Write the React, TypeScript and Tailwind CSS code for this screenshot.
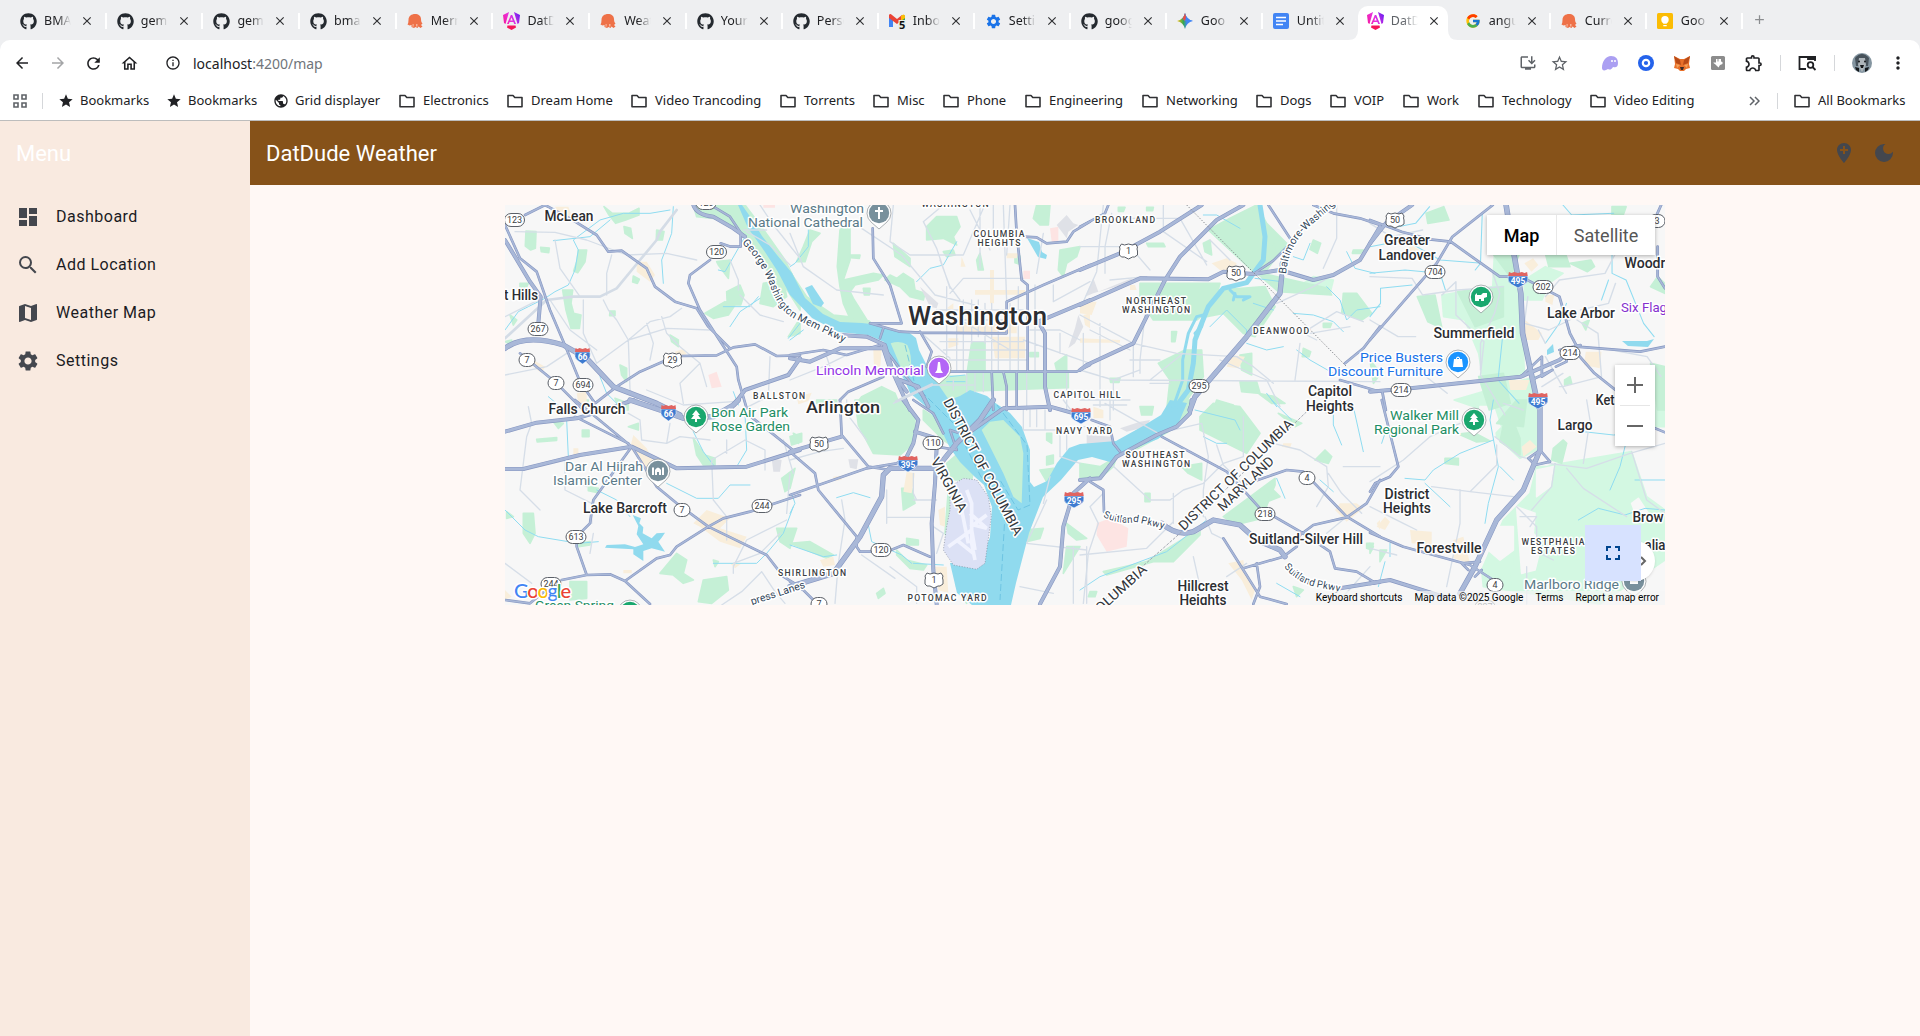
import React from "react";
import {
  MdDashboard, MdSearch, MdMap, MdSettings, MdAddLocation, MdDarkMode, MdFullscreen,
  MdArrowBack, MdArrowForward, MdRefresh, MdOutlineHome, MdInfoOutline, MdInstallDesktop,
  MdStarBorder, MdStar, MdMoreVert, MdPublic, MdOutlineExtension, MdClose, MdAdd,
} from "react-icons/md";
import { FaGithub } from "react-icons/fa";
import { FcGoogle } from "react-icons/fc";

/* ---------- browser tabs ---------- */

type Kind = "github" | "muffin" | "angular" | "gmail" | "gear" | "gemini" | "docs" | "google" | "keep";

const tabs: { kind: Kind; title: string; active?: boolean }[] = [
  { kind: "github", title: "BMAD" }, { kind: "github", title: "gemi" }, { kind: "github", title: "gemi" },
  { kind: "github", title: "bmad" }, { kind: "muffin", title: "Merm" }, { kind: "angular", title: "DatDu" },
  { kind: "muffin", title: "Weat" }, { kind: "github", title: "Your" }, { kind: "github", title: "Perso" },
  { kind: "gmail", title: "Inbox" }, { kind: "gear", title: "Settin" }, { kind: "github", title: "goog" },
  { kind: "gemini", title: "Goo" }, { kind: "docs", title: "Untitl" }, { kind: "angular", title: "DatDu", active: true },
  { kind: "google", title: "angul" }, { kind: "muffin", title: "Curre" }, { kind: "keep", title: "Goo" },
];

function Favicon({ kind }: { kind: Kind }) {
  switch (kind) {
    case "github":
      return <FaGithub size={17} color="#24292f" />;
    case "google":
      return <FcGoogle size={16} />;
    case "gear":
      return <MdSettings size={17} color="#1a73e8" />;
    case "muffin":
      return (
        <svg width="16" height="16" viewBox="0 0 16 16">
          <path d="M1.500 7C1.500 3 4.500 1 8 1s6 2 6 5c0 2 .5 3.500 1.500 4.500L14 12l1.500 1.500-2 1.500-2-1.500-1 1.500-2-1-1.500 1-2.500-1v-2l-2 .5-2-1Q1.500 10 1.500 7Z" fill="#ee7148" />
          <path d="M5.500 11v3l1.200-.6V11M9 11h1.500v2.500H9z" fill="#f8b296" />
        </svg>
      );
    case "angular":
      return (
        <svg width="17" height="18" viewBox="0 0 17 18">
          <defs>
            <linearGradient id="ng" gradientUnits="userSpaceOnUse" x1="0" y1="12" x2="17" y2="3">
              <stop offset="0" stopColor="#f6189a" /><stop offset=".5" stopColor="#e832e0" /><stop offset="1" stopColor="#6a1df0" />
            </linearGradient>
          </defs>
          <path d="M0 3 6 0 2.500 12 1 11ZM17 3 11 0l3.500 12L16 11Z" fill="url(#ng)" />
          <path d="M7.800 3 4 12h1.800l.8-2h3.800l.8 2H13L9.200 3ZM8.500 5.500l1.200 3H7.300Z" fill="url(#ng)" />
          <path d="M4.500 13.500h8l.5 2-4.500 2.500L4 15.500Z" fill="#f5155b" />
        </svg>
      );
    case "gmail":
      return (
        <svg width="17" height="16" viewBox="0 0 17 16">
          <path d="M0 2v12h4V6Z" fill="#4285f4" /><path d="M12 6v8h4V2Z" fill="#34a853" />
          <path d="M0 2Q1 0 3 2l5 4 5-4v5L8 11 0 5Z" fill="#ea4335" /><path d="M12 3q3-3 4 0v2l-4 3Z" fill="#fbbc04" />
          <rect x="9.500" y="7" width="7" height="9" fill="#e6efe9" />
          <text x="10" y="15.500" fontSize="11" fontWeight="700" fontFamily="Noto Sans, sans-serif" fill="#111">5</text>
        </svg>
      );
    case "gemini":
      return (
        <svg width="16" height="16" viewBox="0 0 16 16">
          <defs>
            <linearGradient id="gm" x1="0" y1=".5" x2="1" y2=".5">
              <stop offset="0" stopColor="#fbbc04" /><stop offset=".4" stopColor="#34a853" /><stop offset=".62" stopColor="#4285f4" />
            </linearGradient>
          </defs>
          <path d="M8 0q1.500 6.500 8 8-6.500 1.500-8 8-1.500-6.500-8-8 6.500-1.500 8-8Z" fill="url(#gm)" />
          <path d="M8 0q1.500 6.500 8 8H8L5.500 5.500Q7 4 8 0Z" fill="#3f86f5" /><path d="M8 0Q7 4 5.500 5.500L8 8l1-4Z" fill="#ea4e43" />
        </svg>
      );
    case "docs":
      return (
        <svg width="16" height="16" viewBox="0 0 16 16">
          <rect width="16" height="16" rx="2" fill="#4285f4" />
          <path d="M3 4.500h10M3 8h10M3 11.500h7" stroke="#fff" strokeWidth="1.600" />
        </svg>
      );
    case "keep":
      return (
        <svg width="16" height="16" viewBox="0 0 16 16">
          <rect width="16" height="16" rx="1.500" fill="#fbbc04" />
          <circle cx="8" cy="6.800" r="3.700" fill="#fff" /><path d="M6 9h4v1.500H6zM6.300 12h3.400v1.300H6.300z" fill="#fff" />
        </svg>
      );
  }
}

function TabStrip() {
  return (
    <div className="flex h-10 items-end bg-[#eeeff1] pl-[10px]">
      {tabs.map((t, i) => (
        <div key={i} className={i < 7 ? "flex h-10 w-[96.7px] shrink-0 flex-col" : "flex h-10 w-[96px] shrink-0 flex-col"}>
          <div className={t.active
            ? "relative mt-1.5 flex h-[34px] w-[90px] -translate-x-px items-center rounded-t-[10px] bg-white pb-1"
            : "relative mt-1.5 flex h-[34px] items-center pb-1"}>
            {t.active && (
              <>
                <svg className="absolute -left-2.5 bottom-0" width="10" height="10"><path d="M10 0v10H0Q10 10 10 0Z" fill="#fff" /></svg>
                <svg className="absolute -right-2.5 bottom-0" width="10" height="10"><path d="M0 0v10h10Q0 10 0 0Z" fill="#fff" /></svg>
              </>
            )}
            <div className={t.active ? "ml-[9px] flex w-[17px] shrink-0 items-center" : "ml-[10px] flex w-[17px] shrink-0 items-center"}>
              <Favicon kind={t.kind} />
            </div>
            <div className={t.active
              ? "ml-[7px] w-[27px] shrink-0 overflow-hidden whitespace-nowrap text-[12.5px] text-[#5f6368] [mask-image:linear-gradient(90deg,#000_45%,transparent)]"
              : "ml-[7px] w-[27px] shrink-0 overflow-hidden whitespace-nowrap text-[12.5px] text-[#202124] [mask-image:linear-gradient(90deg,#000_50%,transparent)]"}>
              {t.title}
            </div>
            <MdClose className="ml-[9px] shrink-0 text-[#303134]" size={14} />
            {!t.active && tabs[i + 1]?.active !== true && <div className="ml-auto h-4 w-0.5 bg-white" />}
          </div>
        </div>
      ))}
      <MdAdd className="mb-[13px] ml-[9px] text-[#8b8d90]" size={15} />
    </div>
  );
}

/* ---------- toolbar ---------- */

function Toolbar() {
  return (
    <div className="flex h-[46px] items-center bg-white text-[#202124]">
      <MdArrowBack className="ml-[13px]" size={18} />
      <MdArrowForward className="ml-[18px] text-[#a4a5a7]" size={18} />
      <MdRefresh className="ml-[17px]" size={19} />
      <MdOutlineHome className="ml-[17px]" size={19} />
      <MdInfoOutline className="ml-[26px]" size={16} />
      <div className="ml-3 text-[14px]">localhost<span className="text-[#70757a]">:4200/map</span></div>
      <div className="ml-auto flex items-center">
        <MdInstallDesktop className="text-[#5f6368]" size={18} />
        <MdStarBorder className="ml-[13px] text-[#5f6368]" size={19} />
        <svg className="ml-[32px]" width="18" height="18" viewBox="0 0 18 18">
          <path d="M1 14C1 7 5 2 10 2s7 3 7 7c0 4-2 5-5 4-2 3-3 3-5 2-3 2-6 2-6-1Z" fill="#ab9ff2" />
          <path d="M11 6v2M14 6v2" stroke="#fff" strokeWidth="1.500" />
        </svg>
        <svg className="ml-[18px]" width="18" height="18" viewBox="0 0 18 18">
          <circle cx="9" cy="9" r="8" fill="#2563eb" /><circle cx="9" cy="9" r="3.200" fill="none" stroke="#fff" strokeWidth="2.200" />
        </svg>
        <svg className="ml-[18px]" width="18" height="18" viewBox="0 0 18 18">
          <path d="m1 2 6 3h4l6-3-1 8 1 4-4 1-2 2H7l-2-2-4-1 1-4Z" fill="#e8702a" />
          <path d="m1 2 6 4 1 5-5-2ZM17 2l-6 4-1 5 5-2Z" fill="#b84a17" /><path d="M7 13h4l-1 3H8Z" fill="#3a2b26" />
          <path d="m3 10 4 1-3 3ZM15 10l-4 1 3 3Z" fill="#f5a25a" />
        </svg>
        <svg className="ml-[19px]" width="16" height="16" viewBox="0 0 16 16">
          <rect x="1" y="1" width="14" height="14" rx="1.500" fill="#8c8c8c" />
          <path d="M6 4h1.500v2.500h1V4H11v2.500l1.500.5v2L10 10l-1.500 2.500L7 11 5.500 9.500 3.500 8V7.500H6Z" fill="#fff" />
        </svg>
        <MdOutlineExtension className="ml-[18px]" size={20} />
        <div className="ml-4 h-4 w-px bg-[#d5d7da]" />
        <svg className="ml-[17px]" width="19" height="18" viewBox="0 0 19 18" fill="none" stroke="#202124" strokeWidth="1.800">
          <path d="M17 7V3H1.500v12H8" /><path d="M10 3h7v2h-7z" fill="#202124" /><circle cx="12.500" cy="11" r="2.800" /><path d="m14.500 13 3 3" />
        </svg>
        <div className="ml-[17px] h-4 w-px bg-[#d5d7da]" />
        <svg className="ml-[17px]" width="20" height="20" viewBox="0 0 20 20">
          <circle cx="10" cy="10" r="10" fill="#8495a0" /><path d="M3 5q7-8 14 0l-1 8H4Z" fill="#47525b" />
          <path d="M7 5h6l1 7-4 7-4-7Z" fill="#aeb5ba" /><circle cx="7" cy="8.500" r="1" fill="#15181b" /><circle cx="13" cy="8.500" r="1" fill="#15181b" />
          <path d="M8 12h4l-1 3H9ZM3 14l4 1v4l-3-2ZM17 14l-4 1v4l3-2Z" fill="#14171a" />
        </svg>
        <MdMoreVert className="ml-[16px] mr-[12px]" size={20} />
      </div>
    </div>
  );
}

const bookmarks: { label: string; icon: "star" | "globe" | "folder"; w: string }[] = [
  { label: "Bookmarks", icon: "star", w: "w-[108px]" }, { label: "Bookmarks", icon: "star", w: "w-[107px]" },
  { label: "Grid displayer", icon: "globe", w: "w-[125px]" }, { label: "Electronics", icon: "folder", w: "w-[108px]" },
  { label: "Dream Home", icon: "folder", w: "w-[124px]" }, { label: "Video Trancoding", icon: "folder", w: "w-[149px]" },
  { label: "Torrents", icon: "folder", w: "w-[93px]" }, { label: "Misc", icon: "folder", w: "w-[70px]" },
  { label: "Phone", icon: "folder", w: "w-[82px]" }, { label: "Engineering", icon: "folder", w: "w-[117px]" },
  { label: "Networking", icon: "folder", w: "w-[114px]" }, { label: "Dogs", icon: "folder", w: "w-[74px]" },
  { label: "VOIP", icon: "folder", w: "w-[73px]" }, { label: "Work", icon: "folder", w: "w-[75px]" },
  { label: "Technology", icon: "folder", w: "w-[112px]" }, { label: "Video Editing", icon: "folder", w: "w-[130px]" },
];

function Folder() {
  return (
    <svg width="16" height="14" viewBox="0 0 16 14" fill="none" stroke="#303134" strokeWidth="1.600" strokeLinejoin="round">
      <path d="M1 1.500h5l1.800 2H15v9.200H1Z" />
    </svg>
  );
}

function BookmarkBar() {
  return (
    <div className="flex h-[35px] items-center border-b border-[#bdbdbd] bg-white pb-1 text-[13px] text-[#202124]">
      <svg className="ml-[13px]" width="14" height="14" viewBox="0 0 14 14" fill="none" stroke="#5f6368" strokeWidth="1.600">
        <path d="M1 1h4v4H1zM9 1h4v4H9zM1 9h4v4H1zM9 9h4v4H9z" />
      </svg>
      <div className="ml-[15px] mr-[15px] h-4 w-px bg-[#d5d7da]" />
      {bookmarks.map((b, i) => (
        <div key={i} className={"flex shrink-0 items-center whitespace-nowrap " + b.w}>
          <div className={b.icon === "folder" ? "ml-px flex w-6 shrink-0 items-center" : "flex w-[22px] shrink-0 items-center"}>
            {b.icon === "star" ? <MdStar size={16} /> : b.icon === "globe" ? <MdPublic size={16} /> : <Folder />}
          </div>
          {b.label}
        </div>
      ))}
      <svg className="ml-auto" width="11" height="10" viewBox="0 0 11 10" fill="none" stroke="#5f6368" strokeWidth="1.500">
        <path d="m1 1 4 4-4 4M6 1l4 4-4 4" />
      </svg>
      <div className="ml-[17px] h-4 w-px bg-[#d5d7da]" />
      <div className="ml-4 mr-[14px] flex w-[112px] items-center gap-2 whitespace-nowrap"><Folder />All Bookmarks</div>
    </div>
  );
}

/* ---------- map geometry ---------- */

/* The map is described in eight survey sheets, three units to a pixel. */
const sheet = {
  A: "translate(500 200) scale(.33333)",
  B: "translate(790 200) scale(.33333)",
  C: "translate(1080 200) scale(.33333)",
  D: "translate(1370 120) scale(.35077 .33333)",
  E: "translate(500 400) scale(.33333)",
  F: "translate(790 400) scale(.33333)",
  G: "translate(1080 400) scale(.33333)",
  H: "translate(1370 400) scale(.33333)",
} as const;
type Sheet = keyof typeof sheet;
type Shapes = [Sheet, string][];

const parks: Shapes = [
  ["A", "M78 93 108 95 106 145 92 150 76 138ZM122 142l26 2-2 14-22-3ZM235 150l25 0-5 35-22 33-12-5 10-30ZM312 20l25 20 50 0 30-15 0 20-40 15-30 10-20-25ZM372 80l20 5 5 30-22-15ZM470 90l22 5-5 25-18 0ZM400 228l18 10-6 12-14-4ZM188 270l30 0-5 40 8 30 22 5-5 40-25 0-15-55ZM330 333l15 0 0 14-16 0ZM510 405l25 15 0 20-20-15ZM680 275l40-20 12 30-10 30-40 0ZM615 340l60-35 30 10-20 30-45 10ZM650 185l40-5-5 55-30-40ZM580 15l155 0 60 80 60 85 45 90 0 60-45-70-65-60-40-80-60-50-50-15-50-5ZM790 250l60-10 10 50-40 30-40-10ZM360 495l20 10 0 40-15-20ZM345 595l40 15 0 20-25 0ZM30 345l20 15-10 15ZM15 425l20-5 0 15ZM60 250l25 0-5 10-20 0ZM865 410l35-55 0 45Z"],
  ["B", "M60 90 90 100 65 125 45 185 20 185 40 140ZM150 90l30-30 0 120-20 60 90-20 30 5-15 15-70 15-15 20 10 20 50 80-10 25-30 0-40-90-10-50-8-60ZM410 80l30-30 60 0 10 30-20 30 10 25-40-20-50 5ZM310 130l50 45 0 25-45-30ZM340 220l30 20 5 30 30 10-5 20-40-10-30-30-45-20 15-15 20 10ZM570 160l10 50-15 0-5-30ZM740 15l40 0-5 60-25 0-20-20ZM810 150l60-10-10 30-30 20-10 40-15-20ZM545 428l40 0 0 85 250 0 0 50-280 10-60 30-80-30 30-45 85 0ZM720 458l25 0 0 12-25 0ZM795 490l35-25 0 45-30 0ZM180 165l30 0-2 10-25-2ZM220 265l20 0-2 20-15 0ZM460 155l30-5 5 15-25 5ZM675 168l15 0 0 25-15-5ZM215 590l60-30 40 20 20 50-150 0ZM0 215l50 75 80 55 90 10 20 10-110 5-60-30-70-75Z"],
  ["C", "M385 90 450 55 530 15 560 70 620 130 560 210 520 215ZM370 130l20-10 5 45-20-10ZM200 130l50 0 5 10-50 0ZM180 250l240 0-20 70-50 40-130 0-40-60ZM415 270l140-10 30 60-60 90-35-10-60-60-50 10ZM525 215l220 50 10 20-160-10ZM585 120l35 10-10 30-30-20ZM700 120l22 10-10 30-22-12ZM790 280l40 0 45 60-30 20-60-20ZM820 150l30 0-8 10-25 0ZM275 395l15 0-5 30-10 0ZM235 490l80-40 50 0 5 80-70 100-40 0 10-90ZM480 465l35-5 0 65-30-15ZM480 545l50 0 10 35-55-5ZM410 600l50 15-60 15ZM535 580l50 10 30 20-40 0ZM200 22l20 0-2 10-18 0ZM115 22l20 0-5 12-15 0ZM730 370l25 0-5 12-20 0ZM670 445l22 10-5 15-20 0ZM90 535l30 0-3 12-25 0Z"],
  ["D", "M135 530l50-5 20 100-40-20ZM250 515l130-15 0 90-80 30ZM350 400l80-10-30 80ZM160 280l50-20 15 40-60 10ZM500 400l50-20 20 60-60 0ZM570 430l60-10 10 20-20 15ZM0 720l30 40-20 30ZM800 730l40 10 0 130-20 0ZM310 770l70-10 20 90-60 20ZM820 470l20 20 0 30-40-20ZM555 780l15-10 5 20-20 5ZM605 610l20-10-10 30ZM690 260l40 0-10 30-30 0Z"],
  ["E", "M580 115l35 50 30 10 0 20-35 0-20-30ZM110 118l60-5 0 8-58 5ZM160 65l30 5-15 15ZM247 90l20 0 0 20-20 0ZM240 0l25 0-5 20ZM70 340l30 0 5 60-15 30-20-30ZM210 545l50 0 0 50-50 5ZM480 520l50-60 30 20-10 40 30 20-30 10-30-25ZM610 540l70-10 5 40-50 40-40-5ZM830 385l60 0-20 60-30-20ZM845 235l40-30-15 60-15 10ZM880 100l20 10-5 20ZM265 260l30 5-5 12-25-5ZM230 430l40-5 0 10-35 5ZM385 80l30-10 0 20ZM20 335l20 15-20 5ZM640 480l15 5-10 15Z"],
  ["F", "M195 0 350 0 375 60 370 130 330 165 250 160 205 75ZM400 30l90 60 15 60-45-30-60-60ZM470 190l70-60 15 60-10 50-60 0ZM475 270l40 60-40 90-10-20ZM335 265l30 0 10 45-35 20ZM350 415l35 5 0 15-35 0ZM80 0l60 0 0 10-60 0ZM0 110l35-10 0 25-30 10ZM260 580l20-15 5 15-20 15ZM320 450l30 30 60 15-10 15-40-5-40-40ZM770 170l20-5 0 25-20 5ZM770 100l15 0 0 30-15-10ZM750 210l40-5 30 10-50 30ZM700 390l60-5-10 30-40 10ZM830 370l60 45-30 5-25-20ZM830 440l40 0-50 80ZM550 0l50 0-30 40-30 5ZM0 430l60-5 70 40-20 10ZM490 490l40 120-30-50Z"],
  ["G", "M0 190 60 200 110 170 100 200 60 235 0 240ZM130 150l90-40 90-110 30 0-15 50-60 45-90 50ZM360 50l40-40 80 10 60 80-40 60-80-40-60-30ZM430 350l155-115 0 20-40 100-80 20ZM550 310l30-40 20 20ZM70 515l130-30 80-50 80-50 0 20-80 80-60 0-140 40ZM305 200l60-10 0 50-40-20ZM195 280l15 0 0 25-15 0ZM735 150l20 20-10 20-40-10ZM860 430l20 0-5 20-15-5ZM640 560l30 10-20 20ZM30 575l20 0-5 15-20 0ZM280 0l20 30-20 15ZM180 20l40 0-5 25-30 0ZM595 40l70 30-20 10Z"],
  ["H", "M265 102l45-5 50 26-40 3ZM550 145l30-25 10 10-15 60-30-10ZM225 175l40 0 0 20-40-5ZM400 75l30-10 20 50 0 50-60-40ZM0 430l10 10-10 20ZM30 450l20 0-20 35ZM440 0l30 0-10 80-80-10Z"],
];

const paleParks: Shapes = [
  ["D", "M355 400 410 400 435 640 440 760 330 830 310 700 270 600 210 590 205 525 350 500ZM440 480l60-40 50 20-40 30-20 50-50 0ZM240 840l230-70-10 110-110 0Z"],
  ["H", "M290 0 500 0 500 150 450 175 380 110 370 30ZM545 195 785 155 830 290 885 330 885 480 690 612 340 560 335 510 400 360 480 280 500 200 530 200ZM855 0h30v80h-30ZM340 500l40-80 60-60-20 200Z"],
  ["C", "M700 230l60 10-10 40-110-10Z"],
];

const clearings: Shapes = [
  ["H", "M500 210l50-10-10 60-40 30ZM440 320l55 20-5 60 25 30-20 80-40 10ZM380 380l50 0 0 70-40 30-35-30ZM785 310l20-15 40 60-40 10ZM330 20l40 0 20 60-20 20-40-10Z"],
];

const commerce: Shapes = [
  ["A", "M165 20l40 0 15 40-30 0ZM410 185l30 0 25 40-15 20-40-30ZM100 480l35 20-10 20-25-20ZM230 580l30-5 0 35-25 0ZM525 455l25-8 10 15-30 10Z"],
  ["B", "M605 410l100 0 0 65-90 0ZM475 415l30 0 0 20-30 10ZM600 210l12 0 0 100-12 0ZM650 160l35 0-5 15-30 0ZM470 325l20-15 0 20ZM250 450l25 0-5 60-18 0ZM515 170l12 30-15 0ZM555 270l150 0 0 14-150 0ZM880 345l20-5 0 45-15-10ZM20 590l45-12-10 25-30 10ZM500 370l180 0 0 30-180 0Z"],
  ["C", "M395 190l45-15 30 15-10 20-40 0ZM0 310l50-5-15 40-35-5ZM455 465l40 5-20 35-35-5ZM0 415l120 5 0 8-120 0ZM150 255l15 0 5 15-20 0Z"],
  ["D", "M430 590l60 50-10 20-45 0ZM615 695l45 0-5 50-45-10ZM440 430l25-15 15 20-20 20ZM500 525l25 0-5 30-20-10ZM110 370l30 20-25 10ZM395 780l60 0-10 30-45 0Z"],
  ["E", "M400 105l40 40 30 60-20 10-60-70ZM580 370l40-40 70 25-30 30 80 25-20 35-60-20-60-45ZM220 145l15 0 0 30-15 0ZM15 570l20 20-20 10ZM690 490l35 0-20 15ZM370 510l25 0 0 10-25 0Z"],
  ["F", "M350 215l25 5-10 60-25-5ZM445 330l20-10 0 60-15-5ZM435 500l35 0 5 80-30-10ZM90 480l40-10 5 25-35 5ZM130 230l25-3 0 12-25 5Z"],
  ["G", "M610 130l25 0-5 15-25-5ZM780 310l50 0 20 15-50 40-35-35ZM445 490l45-10 5 40 30 50-10 30-30-60ZM890 370l10-10 0 30ZM40 20l30 10 0 25-30 0Z"],
  ["H", "M120 390l65 5 0 40-60-5ZM20 380l25-30 15 15-15 25ZM455 140l25-20 20 20-40 30ZM250 420l30-10 20 80-50-15Z"],
];

const clinics: Shapes = [
  ["A", "M625 525l25-10 15 45-30 5ZM790 15l35 0 0 8-35 0Z"],
  ["B", "M780 85l25-5 0 45-20 0ZM700 212l20 0 0 25-20 0Z"],
  ["G", "M50 370l40-15 55 30-5 55-60 15-30-50Z"],
];

const greys: Shapes = [
  ["B", "M390 260l55 50-5 15-20-5ZM865 345l-10 40-20 60 20-15 25-50ZM800 75l30-30 20 25 15 5-30 20-5 20Z"],
  ["C", "M15 290l25-55 15 40 100-40 5 10-120 35Z"],
  ["E", "M815 175l30 5-5 35-20 0Z"],
  ["G", "M20 105l75 5-10 50-65-20ZM120 85l60-20 30-5-10 20-60 15Z"],
  ["F", "M175 178l30 0-5 30-20-5Z"],
];

const streams: Shapes = [
  ["A", "M15 390l40-55 30-15 50-25 30-20 40-20 20-45 10-60-15-30 80-60 70-20 80 0 60-10M160 122l110-12 60-50M520 20l-5 80-30 80 5 70M670 320l80 0 25-30M690 380l30-45 60-40M735 110l-60 105-20-5M145 590l30 25M300 530l20 50 30 30M700 575l15 40M865 415l35-45"],
  ["B", "M55 90l0 50-40 50-15 10M380 245l40-40 40-10 40-70M0 420l40-30M470 545h55M480 530l45-5"],
  ["C", "M370 45l40 0 70 40M640 170l30 10 20-50M740 260l40 40 20 60 30-30 70-10M640 340l60 5 60 20 30 30M500 430l60 20 50-10M650 450l40 30 70 40M390 380l50-50 60 60 0 30M800 155l25 50 60 15M560 580l30 40M520 310l60 20M525 235l80 10"],
  ["D", "M0 380l100-20 100 60 120 10M0 460l100-10 100 10 15 50M170 260l-40 50-50 10M320 280l-5 150-15 20M0 590l30-40 0-45 90-10M550 255l25 30 120-5M690 390l0 70 40 20 50 130 30 40M500 670l40-60 20-60M380 630l-15 150 60 70M680 480l-20 60"],
  ["E", "M15 330l60 60 40 20 120 20 60-5M200 60l5 110M580 95l30 60 30 40M735 40l5 110-30 50M500 250l90 45 65 0 35-40 60 0M640 490l130 0 30-30 50-60 30-80M290 270l60 30 40 50"],
  ["F", "M140 293l50-15 50 15M235 375l10 50 90 40 30 25M0 435l100 35 40-5M0 340l15-30-10-30M370 490l90 5"],
  ["G", "M345 30l120 30 15 30M370 110l40 20 30 0M590 235l25 60M0 570l60-40 160-60 40-15 120-95M720 240l40 35M575 0l60 60M760 15l0 60 25 60M820 20l30 135M590 550l70 40"],
  ["H", "M35 130l20-60M370 0l-10 60 25 140-30 110-10 60M370 120l-100 40-80 50-25 30-60-5M165 250l75 70M390 200l40 40M625 360l60-35 80 20 60-20 60 5M770 120l-20 80-30 70M795 240l90 0M640 95l90 10 90-5M60 430l0 40M25 560l20-75M850 30l0 60"],
];

const minors: Shapes = [
  ["A", "M45 95l120 2 95 23 120 45 120-5 90 20M165 120l15 85 60 85M250 300v100l40 90 95-70 65-55 60-15 35-25M320 285v-65l15-55M310 300l15 30 25 30 35 60 5 150 30 40M440 370l20 60-10 50M485 350l15 50 40 40 60 50 20 70M385 420l115-35 130 5M15 525l125-25 60-40M150 300l60 90 80 60M440 570l110 45 150-10M690 180l25 60 0 30M810 470l-5 120-60 30M550 610l-10-60 60-60M720 285l60 60 70 20M740 95l70 40 60 60M780 15l40 60 80 100M730 90l70 0M15 350l120-60"],
  ["B", "M0 100l40 100 100 70 140 15M215 85l120 80 100 120 120 30M310 15l-10 110 60 40 160 0 60-140M450 180l30 80 30 40M480 280l40-45 180 0M460 15l-60 50 40 80 40 120M570 15v190M610 15v100M640 15l10 290M660 15l-10 150M470 260l0 250M500 380v130M520 300v210M545 300v130M565 300v110M585 310v120M605 310v200M625 360v150M660 310v200M685 260v250M735 255v260M440 330h260M460 360h190M450 425h250M460 450h250M470 480h240M330 395l60 0 90 80M480 340l180 110M700 420l200 70M720 390l90 0 60 30M790 255l0 50 110-60M760 100l-20 120M810 400v60M0 540l100-40 80-40M110 470l20 60M310 610l120-55 120 0M490 540v30M530 515v60M555 515v60M580 515v60M710 515v115M830 515v115M540 30l60 120"],
  ["C", "M70 15l-20 200-40 90M95 40l-20 100 0 80M0 140l150 0 60 70M140 55l160 0 80 140M250 15v80l130 90M390 120l60 60M0 345l160 85 130 30 180 10 50 30 60 50M200 300l-20 180 0 40M160 430l0 100M60 370v250M10 400v100M0 510l100 30 800 5M210 540l100-80M90 240l110-10M30 390l120 60M100 540l80-30M510 400l140-10 60 30M690 385l80-50 80 30M660 430l-15 110M690 400l120-20M420 480l140 60 40 80M770 15v100l-40 90M150 480h90M210 550h60M100 630V545M0 600h150M590 310l110-50 100-60"],
  ["D", "M0 310l60 40 90-20M0 470l120 5 30 50 100-15 130-10M205 525l40-40 0 100 80 80-10 100 70 120M500 530l40-50 130-20 30-60M350 460l20 60-15 60-40 90 0 80M590 600l60 40 10 130-110 30-10 0M450 530l-10 80 70 20 60-30M500 670l-20-40M600 570l80-20 20-60M560 820l-60-110M490 800l60-40M220 820l-60-50M690 690l100 20 40 60M0 600l80 50 50 0"],
  ["E", "M80 110l15-40-10-50M80 110l-20 160 60 60M420 60l5 60 75 10 40-20 90 10M385 40l35 20M500 130l10-60M195 180l0 90 80 40 0 60M220 240l40 20M640 300l-5-120 100-60 60 30 0 60M640 300l40 50 0 70M860 360l-120 60-40 80 0 20M785 515l-60 60-60 40M785 515l40 60 30 35M15 490l80 60M280 400l-10 60M700 490l80-30 60-60M850 120l30 100M870 220l-10 120M680 160l0-40"],
  ["F", "M170 0v40l60 80M0 180l90-25 70-10M155 300l10 60-20 130-10 120M370 300l70 0M290 270v100M290 352h130M300 500l80 60 0 50M215 465l100 70M430 380l30 20-20 60M370 220v60l10 20M700 30v60h110M720 30v50M740 30v50M765 30v60M780 230l-20 80M770 300l-60 130 180 20M820 0l30 40M810 90v80l60 20M830 90v60M850 440v170M890 440l0 170M690 560l100 20"],
  ["G", "M75 10l160 90M235 100l130-30 20 100-15 100 0 80M90 190l120 110 60 0 40-30 60-20 60-60 60-20 0-120M280 280l0 90M70 280l-40 40 25 50-30 90-15 150M0 465l200-20 80-80M140 15h-100M0 80h80M90 0v60M375 350l20 50 40 20M350 400l50-40M580 130l80 20 80 50 5 60-35 60M745 220l40 60 60 60M790 200l110 0M800 350l-60 50M440 530l60-40M340 470l20 90-20 50M870 500l-90 100M700 0l40 40M490 255l-60-60-20-60"],
  ["H", "M535 190l115 15 130-45 105-30M590 205l50 60 130 85M785 155l45 145 55 40M375 110l75 60 40 10M0 245l100-65 80-70 90-40M185 260l115 15 130 15M270 270v100l-40 190M0 320l100 50 40 20M555 190l-10 70-60 70M440 320l60 60 0 70M450 350h50l-20 30M660 60l-20 130M650 0l10 60M300 275l80-80 0-60M470 500l0 112M490 450l60 30M400 10l60 20M0 445l80 20"],
];

const majors: { w: number; list: Shapes }[] = [
  { w: 8, list: [
    ["A", "M15 75l45 100 50 40 40 115 55 130 35 85 45 65M75 45l60-30 75 40 80 50 35 50 40-3 75 53 25 55 60 45 65 20 35 55 65 65M285 610l65-50 70-45 80-35 45-12 105-2 50-24 65-9 65 35 70-2M630 180l-60 45-5 25 35 80 110 170 5 40 25 85M640 20l50 30 40 60M722 105v35l-30 0-30-10M60 460l110 90 75 75"],
    ["B", "M248 85l2 90 50 80 35 115h-95M675 15l5 85 15 140 18 15v260M700 110l40 2 30 18 60-5 20-30 50-30M900 195l-140 60-110 50v95l-260-2-60-3-90-25M390 395l35 60-15 45 60 15h390l40-20M0 465l100-15 70 15 100-30M150 600l25-25 105-45M605 515l5 115M640 515l10 45v70M680 515v105M280 385l-10 30M280 440l60 80 60 70"],
    ["C", "M0 80l75-40 10-25M565 15l65 100M900 380l-50 65-55 45M780 540l120 35M700 15l60 25 80 15 60 20M520 222l60-40 40-40"],
    ["D", "M350 255l-115 95-45 80L0 660M170 358l60 7 140 105 60 0 110 60 30 110 20 40 180 15 71-15M35 815l10 55M590 700l50 60 60 50M0 300l90 35 80 23M820 380v90l21 35M830 255l-15 35M540 690l60-15M530 740l30-15 0-20M430 770l60-60 0 60 30-20-60 30"],
    ["E", "M225 50l160 80M225 0l55 45 115 95M740 40l70 55 75 60M395 140l-115 160-10 70-40 40v30l30 85M395 140l75 120 60 50 95 70 175 85 50 65 50 30M185 540l75-15 70-2 45 20 95-68 40-10 20-25 95-60 45-25 80-20 150-50M375 543l75 69M15 600l75 10 60-50"],
    ["F", "M0 155l75 65 10 50 115 140 0 30 10 15h80l50-20 80 35M150 0l5 105 80 95 65 10M0 285l230-80 90-15 30-20M35 565l35 35M0 545l40 25M540 110l-60-20 20 60-60-10M370 0l60 40 30 60"],
    ["G", "M245 110l195 105 100 110 130 75M35 60l55 20 10 50 20 25M30 245l40 25 2 65M430 415l60 95 50 80 80 22M670 400l80 55 15 50 65 10 50 30M530 490l10 70-20 52M490 255l130-45 50 5 130 135 100 60M900 240l-40 70-60 42-100 23-40 30-10 35-40 30-120 35"],
    ["H", "M35 0l30 120 20 80-25 30-45 20-15 25M0 398l100 42 200 55 70 45M510 150l-35 25 20 20M510 150l30 35-45 10M855 85l30 12M295 510l-20-20 55-5M335 510l-20 20"],
  ] },
  { w: 12, list: [
    ["A", "M15 120l75 125 32 45-7 80M900 475l-35 50-130 45-45 60M580 15q10 30 60 35l60 35 35 25"],
    ["B", "M900 300l-155 65 20 35v160l15 70M0 475l60 10 90-40h130l20 60 50 70M150 405l80 5 55 25 25 85 50 110M330 540l55 20 30 60"],
    ["C", "M0 210l120-50 120-65 125-80M490 15l-80 45-110 110-45 70-95 190-140 65-20 15M0 315l180-80 205 3 45-23 90 7 80-12 100 30 60-15 80-45 60-100M605 230v-40"],
    ["D", "M0 370l45-60 75-55M0 815l130-12 300-33 110-50 50-40"],
    ["E", "M15 95l95-27 120-13 100-30 70-25M15 207h55l170-42 155-25 135 65 210-5 160-50"],
    ["F", "M0 155l155-45M440 140l-5 110-10 120 5 140 10 102M340 0l45 60-15 70-20 40M375 95l65 20M900 235l-50 45-30 100-10 120-60 112M520 110l120-85 140-5 90 25"],
    ["G", "M0 240l60-5 50-65 120-65 60-25 40-40 5-40M780 565l120-20"],
    ["H", "M0 550l60-10 160 50"],
  ] },
  { w: 16, list: [
    ["A", "M15 445q60-45 175-10l70 40 80 85 130 50 70 35"],
    ["C", "M330 630l15-40 155-180 100-130 5-50"],
    ["D", "M388 255l22 145 20 120 5 120 45 220"],
    ["E", "M390 0l90 30 70 25 90-5 60-35 15-15"],
    ["F", "M440 205H300l-20 20-5 65-65 120-80 110-130 40M440 205l60-75 70-70 40-60"],
    ["G", "M245 370q45 40 95 25l60-35 80 15 50 45 70 30 15 20"],
    ["H", "M510 0v150l-50 120-80 90-65 140-45 80"],
  ] },
];

const Layer = ({ list, ...rest }: { list: Shapes } & React.SVGProps<SVGPathElement>) => (
  <>{list.map(([s, d], i) => <path key={i} transform={sheet[s]} d={d} {...rest} />)}</>
);

type Label = [string, number, number, number];
const towns: Label[] = [
  ["McLean", 569, 221, 49], ["t Hills", 521, 300, 34], ["Falls Church", 587, 414, 77], ["Lake Barcroft", 625, 513, 84],
  ["Greater", 1407, 245, 46], ["Landover", 1407, 260, 57], ["Woodr", 1645, 268, 41], ["Lake Arbor", 1581, 318, 68],
  ["Summerfield", 1474, 338, 81], ["Capitol", 1330, 396, 44], ["Heights", 1330, 411, 48], ["Largo", 1575, 430, 35],
  ["District", 1407, 499, 45], ["Heights", 1407, 513, 48], ["Forestville", 1449, 553, 65], ["Brow", 1648, 522, 31],
  ["Suitland-Silver Hill", 1306, 544, 114], ["Hillcrest", 1203, 591, 51], ["Heights", 1203, 605, 47], ["Ket", 1605, 405, 19],
  ["alia", 1655, 550, 21],
];
const quarters: Label[] = [
  ["WASHINGTON", 955, 207, 67], ["COLUMBIA", 999, 237, 51], ["HEIGHTS", 999, 246, 43], ["BROOKLAND", 1125, 223, 60],
  ["NORTHEAST", 1156, 304, 60], ["WASHINGTON", 1156, 313, 68], ["DEANWOOD", 1281, 334, 56], ["CAPITOL HILL", 1087, 398, 67],
  ["BALLSTON", 779, 399, 52], ["NAVY YARD", 1084, 434, 56], ["SOUTHEAST", 1155, 458, 59], ["WASHINGTON", 1156, 467, 68],
  ["SHIRLINGTON", 812, 576, 68], ["POTOMAC YARD", 947, 601, 79], ["WESTPHALIA", 1553, 545, 63], ["ESTATES", 1553, 554, 44],
];
const places: [string, number, number, number, string][] = [
  ["Washington", 790, 213, 74, "#5b7a88"], ["National Cathedral", 748, 227, 115, "#5b7a88"],
  ["Lincoln Memorial", 816, 375, 108, "#9334e6"], ["Bon Air Park", 711, 417, 77, "#1e8e64"], ["Rose Garden", 711, 431, 79, "#1e8e64"],
  ["Dar Al Hijrah", 565, 471, 78, "#5b7a88"], ["Islamic Center", 553, 485, 89, "#5b7a88"],
  ["Price Busters", 1360, 362, 83, "#1a73e8"], ["Discount Furniture", 1328, 376, 115, "#1a73e8"],
  ["Walker Mill", 1390, 420, 69, "#1e8e64"], ["Regional Park", 1374, 434, 85, "#1e8e64"],
  ["Marlboro Ridge", 1524, 589, 95, "#5b7a88"], ["Six Flag", 1621, 312, 46, "#8430ce"],
  ["Green Spring", 535, 610, 79, "#1e8e64"],
];
const ovals: [string, number, number][] = [
  ["123", 514.500, 220], ["120", 716.500, 252], ["267", 538, 329], ["7", 527, 360], ["7", 556, 383], ["694", 583, 385],
  ["295", 1199, 386], ["704", 1435, 272], ["202", 1543, 287], ["214", 1570, 353], ["214", 1401, 390], ["110", 933, 443],
  ["7", 682, 510], ["244", 762, 506], ["613", 576, 537], ["244", 551, 584], ["120", 881, 550], ["4", 1307, 478],
  ["218", 1265, 514], ["4", 1495, 585], ["3", 1657, 221], ["7", 819, 604], ["120", 706, 203], ["337", 1485, 607],
];
const usRoutes: [string, number, number][] = [["29", 672.500, 360], ["1", 1128.500, 251], ["50", 1236, 273], ["50", 1395, 220], ["50", 819, 444], ["1", 934, 580]];
const interstates: [string, number, number][] = [
  ["66", 582.500, 356], ["66", 668.500, 413], ["395", 908, 464], ["695", 1081, 416], ["295", 1074, 500], ["495", 1518, 280], ["495", 1538, 401],
];
const pins: [number, number, string, string][] = [
  [879, 213, "#78909c", "M-1-6h2v3h3v2H1v7h-2v-7h-3v-2h3Z"],
  [939, 368, "#b366f6", "M-1-6h2l1 8 2 3h-8l2-3Z"],
  [696, 417, "#1aa76e", "M0-7l4 5H2l3 4H1v3h-2V2h-4l3-4h-2Z"],
  [658, 471, "#78909c", "M-6 4v-7l1-1 1 1v7ZM4 4v-7l1-1 1 1v7ZM-3 4v-5q3-5 6 0v5H1V1h-2v3Z"],
  [1481, 297, "#1aa76e", "M-6 4v-6l2-2v2h4l2-2 4 0v4l-3 1v3h-3V2h-2v2Z"],
  [1458, 362, "#1a94ff", "M-5 5l1-8h2v-1q2-3 4 0v1h2l1 8ZM-1-3h2v-1h-2Z"],
  [1474, 420, "#1aa76e", "M0-7l4 5H2l3 4H1v3h-2V2h-4l3-4h-2Z"],
  [1634, 581, "#78909c", "M-4-3h8v6h-8Z"],
  [630, 612, "#1aa76e", "M0-5l3 5h-6Z"],
];

function CityMap() {
  const roads = { fill: "none", strokeLinejoin: "round" as const, strokeLinecap: "round" as const };
  const soft = { strokeWidth: 5, strokeLinejoin: "round" as const };
  const halo = { stroke: "#fff", strokeWidth: 3, strokeLinejoin: "round" as const, paintOrder: "stroke" };
  return (
    <svg className="block h-[400px] w-[1160px] font-['Roboto',sans-serif]" viewBox="505 205 1160 400">
      <rect x="505" y="205" width="1160" height="400" fill="#f7f7f7" />
      <Layer list={paleParks} fill="#d3f8e2" stroke="#d3f8e2" {...soft} />
      <Layer list={clearings} fill="#f7f7f7" stroke="#f7f7f7" {...soft} />
      <Layer list={parks} fill="#c5f0d6" stroke="#c5f0d6" {...soft} />
      <Layer list={commerce} fill="#f9eedb" />
      <Layer list={clinics} fill="#fde4e3" />
      <Layer list={greys} fill="#dfe1e7" />
      <Layer list={streams} {...roads} stroke="#8fdcf1" strokeWidth="3" />

      {/* rivers and lakes */}
      <g fill="#90daee">
        <path d="M738 205 748 228 765 252 778 272 790 295 812 318 838 332 868 335 884 342 895 365 905 381 910 393 924 405 937 421 950 448 960 462 975 477 984 485 992 507 990 537 980 562 950 563 957 593 972 605 1011 605 1016 583 1029 533 1043 497 1061 480 1078 460 1092 457 1110 462 1123 453 1158 439 1179 422 1187 403 1170 400 1161 415 1143 426 1116 441 1080 444 1069 448 1057 463 1047 481 1034 487 1030 482 1030 450 1022 427 1010 413 994 402 987 396 970 390 960 396 949 400 938 384 927 366 919 350 916 338 907 331 890 330 880 325 862 323 840 322 823 314 805 298 792 273 777 255 762 236 749 215 742 205Z" />
        <path d="M805 288l7-3 12 18-3 4-8-3Z" />
        <path d="M1027 238l12 4 3 10 5 3-1 4-8-2Z" />
        <path transform="translate(500 400) scale(.33333)" d="M398 345l25 10-5 15 12 12-2 18 27 15 15-15 25-2-10 15-10 12 20 30-40-10-25 8 0 30-30-20 0-15-85-5 5-8 55-2 30 8 25-8-20-30 5-25Z" />
        <path d="M1622 341l25 0 7-2-6 8-20-1ZM1547 350l6-6 1 8-7 3Z" />
      </g>
      <path transform={sheet.C} d="M280 630 325 570 340 490 345 420 385 320 430 265 500 248 550 180 555 110 540 15" {...roads} stroke="#90daee" strokeWidth="15" />
      <path transform={sheet.C} d="M280 620 308 540 308 480 325 400 350 350 370 345 365 380 345 400M450 270l20 20 40 0-20 10M460 300l5-20" {...roads} stroke="#90daee" strokeWidth="9" />
      <g fill="#c5f0d6">
        <path transform={sheet.F} d="M575 90 600 65 640 60 690 110 700 160 695 310 670 290 640 220Z" />
        <path transform={sheet.B} d="M302 430q30-10 50 5 15 30 10 75l-30-10Z" />
      </g>
      <path transform={sheet.F} d="M480 260 520 235 560 240 595 290 604 350 585 490 560 508 490 495 460 450 470 380 480 330Z" fill="#dce1f5" stroke="#7d8494" strokeWidth="2" strokeDasharray="3 5" />
      <path transform={sheet.F} d="M530 270l15 40v120l10 50M515 330l20 100M475 440l70-50 10 60M590 345l-40 30 40 10-50-45M500 420l50 40" fill="none" stroke="#f1f3fe" strokeWidth="11" />
      <path d="M905 345l10 40 40 40 25 50 25 40-5 85M997 405l30 40 3 60-12 5-18-30" fill="none" stroke="#66bfe0" strokeWidth=".8" strokeDasharray="7 3" />

      {/* streets */}
      <Layer list={minors} {...roads} stroke="#d6dee8" strokeWidth="4" />
      <path transform={sheet.A} d="M15 415l125-115 80-10h80l50-25 70-85 50-60 10-25 50-65" {...roads} stroke="#d4dce6" strokeWidth="8" />
      {majors.map((m) => <Layer key={m.w} list={m.list} {...roads} stroke="#8797c1" strokeWidth={m.w} />)}
      {majors.map((m) => <Layer key={m.w} list={m.list} {...roads} stroke="#a9b8d8" strokeWidth={m.w - 3.500} />)}
      <path d="M895 402l38-18" stroke="#d4dce6" strokeWidth="3" />
      <path transform={sheet.C} d="M320 15 800 500" fill="none" stroke="#85888d" strokeWidth="3" strokeDasharray="4 5" />
      <path transform={sheet.G} d="M680 35 300 400 60 612" fill="none" stroke="#a5a8b2" strokeWidth="3" strokeDasharray="9 4" />

      {/* road shields */}
      {ovals.map(([n, x, y], i) => {
        const w = n.length === 1 ? 16 : 20;
        return (
          <g key={i}>
            <rect x={x - w / 2} y={y - 6.500} width={w} height="13" rx="6.500" fill="#fff" stroke="#5b6068" strokeWidth="1" />
            <text x={x} y={y + 3.300} fontSize="9" textAnchor="middle" fill="#3c4043">{n}</text>
          </g>
        );
      })}
      {usRoutes.map(([n, x, y], i) => (
        <g key={i} transform={`translate(${x} ${y})`}>
          <path d="M-7-7l3 1 4-1 4 1 3-1 2 3q-1 2 0 4v4l-3 2H4L0 8l-4-2h-3l-2-2V0q1-2 0-4Z" fill="#fff" stroke="#5b6068" strokeWidth="1" />
          <text y="3.300" fontSize="9" textAnchor="middle" fill="#3c4043">{n}</text>
        </g>
      ))}
      {interstates.map(([n, x, y], i) => {
        const k = n.length === 3 ? 1.300 : 1;
        return (
          <g key={i} transform={`translate(${x} ${y})`}>
            <path transform={`scale(${k} 1)`} d="M-7.500-4h15q1 5-2 8L0 8l-5.500-4q-3-3-2-8Z" fill="#3e7bd0" stroke="#fff" strokeWidth=".5" />
            <path transform={`scale(${k} 1)`} d="M-7-8l2 1 2-1 3 1 3-1 2 1 2-1 .5 4h-15Z" fill="#e06461" />
            <text y="3.800" fontSize="8.500" fontWeight="700" textAnchor="middle" fill="#fff">{n}</text>
          </g>
        );
      })}

      {/* labels that follow a line */}
      <g fill="#33475b" fontSize="10.500" {...halo}>
        <path id="gw" d="M742 243q20 20 29 45 8 22 22 30l56 27" fill="none" stroke="none" />
        <text letterSpacing=".1"><textPath href="#gw">George Washington Mem Pkwy</textPath></text>
        <path id="bw" d="M1286 274q2-28 24-48l40-34" fill="none" stroke="none" />
        <text><textPath href="#bw">Baltimore-Washington</textPath></text>
        <path id="sp" d="M1103 517q18 8 32 5 12 2 36 9" fill="none" stroke="none" />
        <text fontSize="10"><textPath href="#sp">Suitland Pkwy</textPath></text>
        <path id="sq" d="M1284 567q14 16 32 20l36 7" fill="none" stroke="none" />
        <text fontSize="10"><textPath href="#sq">Suitland Pkwy</textPath></text>
        <text transform="translate(752 605) rotate(-18)">press Lanes</text>
      </g>
      <g fill="#33373c" fontSize="13.500" textAnchor="middle" {...halo}>
        <text transform="translate(979 469) rotate(62)" textLength="153" lengthAdjust="spacingAndGlyphs">DISTRICT OF COLUMBIA</text>
        <text transform="translate(945 487) rotate(61)" textLength="60" lengthAdjust="spacingAndGlyphs">VIRGINIA</text>
        <text transform="translate(1239 478) rotate(-44)" textLength="153" lengthAdjust="spacingAndGlyphs">DISTRICT OF COLUMBIA</text>
        <text transform="translate(1249 487) rotate(-44)" textLength="72" lengthAdjust="spacingAndGlyphs">MARYLAND</text>
        <text transform="translate(1124 592) rotate(-42)" textLength="64" lengthAdjust="spacingAndGlyphs">OLUMBIA</text>
      </g>

      {pins.map(([x, y, c, d], i) => (
        <g key={i} transform={`translate(${x} ${y})`}>
          <path d="M0 16-8 9a12 12 0 1 1 16 0Z" fill="#fff" stroke="#80868b" strokeOpacity=".8" strokeWidth=".8" />
          <circle r="10.200" fill={c} /><path d={d} fill="#fff" />
        </g>
      ))}
      {places.map(([t, x, y, w, c], i) => (
        <text key={i} x={x} y={y} fontSize="13.500" fill={c} textLength={w} lengthAdjust="spacingAndGlyphs" {...halo}>{t}</text>
      ))}
      {quarters.map(([t, x, y, w], i) => (
        <text key={i} x={x - w / 2} y={y} fontSize="8.600" fontWeight="500" fill="#3c4043" textLength={w} {...halo}>{t}</text>
      ))}
      {towns.map(([t, x, y, w], i) => (
        <text key={i} x={x - w / 2} y={y} fontSize="14" fontWeight="500" fill="#2b2d31" textLength={w} lengthAdjust="spacingAndGlyphs" {...halo}>{t}</text>
      ))}
      <text x="806" y="413" fontSize="17" fontWeight="500" fill="#2b2d31" textLength="74" lengthAdjust="spacingAndGlyphs" {...halo}>Arlington</text>
      <text x="908" y="325" fontSize="26" fontWeight="500" fill="#2b2d31" textLength="139" lengthAdjust="spacingAndGlyphs" {...halo}>Washington</text>

      <rect x="1310" y="591" width="355" height="14" fill="#f5f5f5" fillOpacity=".7" />
      <text x="514" y="597.500" fontSize="20" fontWeight="500" fontFamily="Lato, sans-serif" textLength="57" {...halo}>
        <tspan fill="#4285f4">G</tspan><tspan fill="#ea4335">o</tspan><tspan fill="#fbbc04">o</tspan>
        <tspan fill="#4285f4">g</tspan><tspan fill="#34a853">l</tspan><tspan fill="#ea4335">e</tspan>
      </text>
    </svg>
  );
}

function MapPanel() {
  return (
    <div className="relative h-[400px] w-[1160px] overflow-hidden">
      <CityMap />
      <div className="absolute right-[10px] top-[10px] flex h-10 w-[168px] bg-white text-[18px] shadow-[0_1px_4px_rgba(0,0,0,0.3)]">
        <div className="flex w-[70px] items-center justify-center border-r border-[#e8e8e8] font-medium text-black">Map</div>
        <div className="flex flex-1 items-center justify-center text-[#565656]">Satellite</div>
      </div>
      <div className="absolute right-[10px] top-[160px] flex h-[81px] w-10 flex-col items-center bg-white shadow-[0_1px_4px_rgba(0,0,0,0.3)]">
        <svg className="h-10" width="16" height="40" viewBox="0 0 16 40"><path d="M0 20h16M8 12v16" stroke="#666" strokeWidth="2" /></svg>
        <div className="h-px w-[30px] bg-[#e6e6e6]" />
        <svg className="h-10" width="16" height="40" viewBox="0 0 16 40"><path d="M0 20h16" stroke="#666" strokeWidth="2" /></svg>
      </div>
      <div className="absolute right-[10px] top-[336px] flex h-10 w-10 items-center justify-end rounded-full bg-white pr-2 shadow">
        <svg width="7" height="10" viewBox="0 0 7 10"><path d="m1 1 4 4-4 4" fill="none" stroke="#666" strokeWidth="2" /></svg>
      </div>
      <div className="absolute right-6 top-80 flex size-14 items-center justify-center bg-[#d7e2ff] text-[#00458f]">
        <MdFullscreen size={24} />
      </div>
      <div className="absolute bottom-0 right-[6px] flex h-[14px] items-center gap-[12px] whitespace-nowrap text-[10px] leading-none text-black">
        <span>Keyboard shortcuts</span><span>Map data ©2025 Google</span><span>Terms</span><span>Report a map error</span>
      </div>
    </div>
  );
}

/* ---------- application ---------- */

const menu = [
  { label: "Dashboard", Icon: MdDashboard }, { label: "Add Location", Icon: MdSearch },
  { label: "Weather Map", Icon: MdMap }, { label: "Settings", Icon: MdSettings },
];

export default function App() {
  return (
    <div className="flex h-[1036px] w-[1920px] flex-col overflow-hidden bg-[#fff8f5] font-['Roboto',sans-serif]">
      <div className="bg-[#eeeff1] font-['Noto_Sans',sans-serif]">
        <TabStrip />
        <div className="overflow-hidden rounded-t-[10px]">
          <Toolbar />
          <BookmarkBar />
        </div>
      </div>
      <div className="flex flex-1">
        <aside className="w-[250px] shrink-0 bg-[#f9eae0]">
          <div className="flex h-16 items-center px-4 text-[22px] text-white">Menu</div>
          <nav className="pt-2">
            {menu.map(({ label, Icon }) => (
              <div key={label} className="flex h-12 items-center gap-4 px-4 text-[16px] tracking-[0.5px] text-[#1b1b1f]">
                <Icon size={24} color="#44474e" />{label}
              </div>
            ))}
          </nav>
        </aside>
        <main className="flex flex-1 flex-col">
          <header className="flex h-16 items-center bg-[#865219] pl-4 pr-6 text-[22px] text-white">
            DatDude Weather
            <div className="ml-auto flex gap-4 text-[#44474e]">
              <MdAddLocation size={24} /><MdDarkMode size={24} />
            </div>
          </header>
          <div className="flex justify-center pt-5"><MapPanel /></div>
        </main>
      </div>
    </div>
  );
}
